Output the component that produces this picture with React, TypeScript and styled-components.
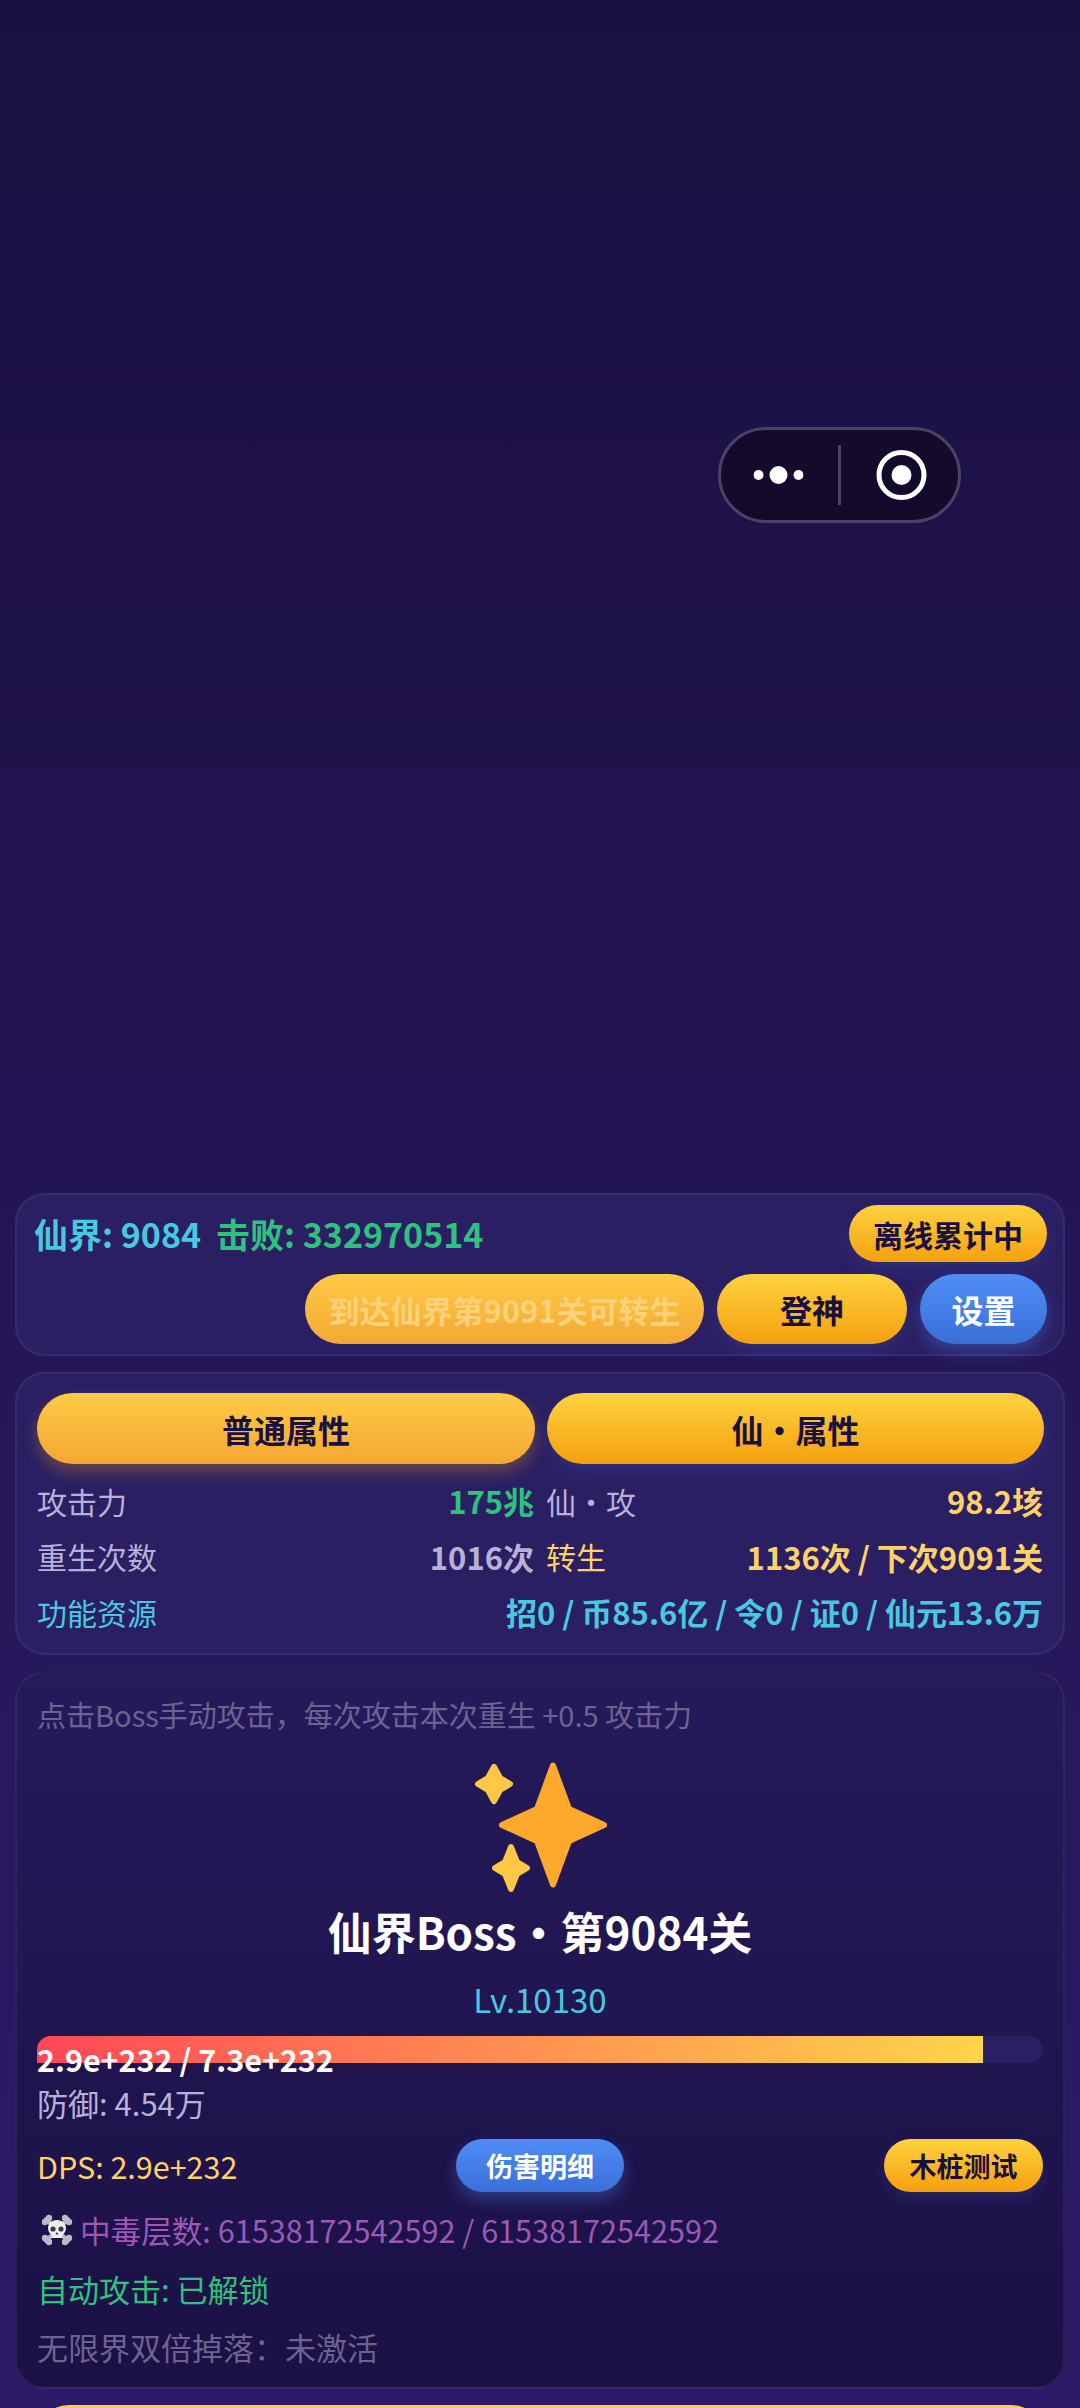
import styled, { createGlobalStyle } from "styled-components";

const Global = createGlobalStyle`
    html, body {
        margin: 0;
        padding: 0;
        background: #1a1040;
    }
    * {
        box-sizing: border-box;
    }
`;

const Page = styled.div`
    position: relative;
    width: 1080px;
    height: 2408px;
    overflow: hidden;
    padding: 1193px 15px 0;
    display: flex;
    flex-direction: column;
    gap: 16px;
    font-family: "Noto Sans CJK SC", "Noto Sans", sans-serif;
    background: linear-gradient(180deg, #1a1040 0%, #2d1b69 100%);
`;

const Capsule = styled.div`
    position: absolute;
    left: 718px;
    top: 427px;
    width: 243px;
    height: 96px;
    border-radius: 48px;
    background: #130a2c;
    border: 3px solid #4b4366;
    display: flex;
    align-items: center;
`;

const CapsuleSide = styled.div<{ $shift: number }>`
    flex: 1;
    display: flex;
    align-items: center;
    justify-content: center;
    transform: translateX(${(p) => p.$shift}px);
`;

const CapsuleDivider = styled.div`
    width: 3px;
    height: 60px;
    background: #4b4366;
`;

const Card = styled.div<{ $tall?: boolean }>`
    flex: none;
    border-radius: 30px;
    border: 2px solid rgba(255, 255, 255, 0.06);
    background: ${(p) =>
        p.$tall
            ? "linear-gradient(180deg, #251a5a 0%, #1b1145 100%)"
            : "#2a1f63"};
`;

const TopCard = styled(Card)`
    height: 163px;
    padding: 10px 16px 10px 17px;
    display: flex;
    flex-direction: column;
    gap: 12px;
`;

const TopRow = styled.div`
    display: flex;
    align-items: center;
    justify-content: space-between;
`;

const ActionRow = styled.div`
    display: flex;
    justify-content: flex-end;
    gap: 13px;
`;

const Progress = styled.div`
    display: flex;
    gap: 15px;
    font-size: 34px;
    font-weight: 700;
`;

const Colored = styled.span<{ $color: string }>`
    color: ${(p) => p.$color};
`;

const Pill = styled.button<{ $tone?: "gold" | "soft" | "blue"; $w: number; $h: number; $size?: number }>`
    width: ${(p) => p.$w}px;
    height: ${(p) => p.$h}px;
    flex: none;
    border: 0;
    padding: 0;
    border-radius: ${(p) => p.$h / 2}px;
    font-family: inherit;
    font-weight: 700;
    font-size: ${(p) => p.$size ?? 32}px;
    color: ${(p) => (p.$tone === "blue" ? "#ffffff" : "#1a1040")};
    background: ${(p) =>
        p.$tone === "blue"
            ? "linear-gradient(180deg, #4f8ef7 0%, #3a6fd8 100%)"
            : p.$tone === "soft"
              ? "linear-gradient(180deg, #ffcb45 0%, #f3a733 100%)"
              : "linear-gradient(180deg, #ffd23f 0%, #f5a00f 100%)"};
    box-shadow: 0 8px 16px
        ${(p) =>
            p.$tone === "blue"
                ? "rgba(79, 142, 247, 0.3)"
                : p.$tone === "soft"
                  ? "rgba(245, 160, 15, 0.3)"
                  : "rgba(79, 142, 247, 0.12)"};
`;

const LockedPill = styled(Pill)`
    box-shadow: none;
    color: #fdd27a;
`;

const CenteredPill = styled(Pill)`
    display: flex;
    align-items: center;
    justify-content: center;
`;

const StatsCard = styled(Card)`
    height: 283px;
    padding: 19px 20px 0;
`;

const TabRow = styled.div`
    display: grid;
    grid-template-columns: 1fr 1fr;
    gap: 12px;
    margin-bottom: 9px;
`;

const StatGrid = styled.div`
    display: grid;
    grid-template-columns: 1fr 1fr;
    column-gap: 12px;
`;

const Stat = styled.div<{ $wide?: boolean }>`
    grid-column: ${(p) => (p.$wide ? "1 / span 2" : "auto")};
    height: 55.5px;
    display: flex;
    align-items: center;
    justify-content: space-between;
    font-size: 30px;
`;

const StatValue = styled.span<{ $color: string }>`
    font-size: 31px;
    font-weight: 700;
    color: ${(p) => p.$color};
`;

const BossCard = styled(Card)`
    height: 718px;
    padding: 20px 20px 0;
    display: flex;
    flex-direction: column;
`;

const Hint = styled.div`
    height: 42px;
    line-height: 42px;
    font-size: 29px;
    color: #6d6391;
`;

const BossIcon = styled.svg`
    align-self: center;
    width: 200px;
    height: 160px;
    margin-top: 6px;
    flex: none;
`;

const BossName = styled.div`
    height: 60px;
    line-height: 60px;
    text-align: center;
    font-size: 44px;
    font-weight: 700;
    color: #ffffff;
`;

const Level = styled.div`
    margin-top: 16px;
    height: 44px;
    line-height: 44px;
    text-align: center;
    font-size: 33px;
    color: #48c9e0;
`;

const HpTrack = styled.div`
    position: relative;
    margin-top: 15px;
    height: 27px;
    border-radius: 14px;
    background: #2a1f63;
    flex: none;
`;

const HpFill = styled.div`
    height: 100%;
    border-radius: 14px 0 0 0;
    background: linear-gradient(90deg, #ff4757 0%, #ffd54a 100%);
`;

const HpText = styled.div`
    position: absolute;
    left: 0;
    top: 1px;
    line-height: 44px;
    font-size: 30.5px;
    font-weight: 700;
    color: #ffffff;
`;

const Line = styled.div<{ $color: string; $size?: number }>`
    display: flex;
    align-items: center;
    font-size: ${(p) => p.$size ?? 31}px;
    color: ${(p) => p.$color};
`;

const Defense = styled(Line)`
    margin-top: 19px;
    height: 40px;
`;

const DpsRow = styled.div`
    margin-top: 17px;
    height: 53px;
    display: grid;
    grid-template-columns: 1fr auto 1fr;
    align-items: center;
    font-size: 30.5px;
    color: #ffd166;
`;

const DpsEnd = styled.div`
    justify-self: end;
`;

const Status = styled(Line)`
    margin-top: 18px;
    height: 40px;
`;

const Skull = styled.svg`
    width: 32px;
    height: 32px;
    margin: 0 7px 0 4px;
    flex: none;
`;

const BottomBar = styled.div`
    flex: none;
    margin: 0 19px;
    height: 70px;
    border-radius: 35px;
    background: linear-gradient(180deg, #ffd23f 0%, #f5a00f 100%);
`;

const star = (cx: number, cy: number, w: number, h: number, waist: number) => {
    const x = w / 2;
    const y = h / 2;
    return `M${cx} ${cy - y}
        L${cx + waist} ${cy - waist}
        L${cx + x} ${cy}
        L${cx + waist} ${cy + waist}
        L${cx} ${cy + y}
        L${cx - waist} ${cy + waist}
        L${cx - x} ${cy}
        L${cx - waist} ${cy - waist}Z`;
};

export default function App() {
    return (
        <Page>
            <Global />
            <Capsule>
                <CapsuleSide $shift={-1.5}>
                    <svg width="50" height="22" viewBox="0 0 50 22">
                        <circle cx="5" cy="11" r="5" fill="#fff" />
                        <circle cx="25" cy="11" r="9" fill="#fff" />
                        <circle cx="45" cy="11" r="5" fill="#fff" />
                    </svg>
                </CapsuleSide>
                <CapsuleDivider />
                <CapsuleSide $shift={1.5}>
                    <svg width="52" height="52" viewBox="0 0 52 52">
                        <circle cx="26" cy="26" r="22.5" fill="none" stroke="#fff" strokeWidth="5" />
                        <circle cx="26" cy="26" r="10" fill="#fff" />
                    </svg>
                </CapsuleSide>
            </Capsule>

            <TopCard>
                <TopRow>
                    <Progress>
                        <Colored $color="#48c9e0">仙界: 9084</Colored>
                        <Colored $color="#2ec27e">击败: 332970514</Colored>
                    </Progress>
                    <Pill $w={198} $h={57} $size={30}>离线累计中</Pill>
                </TopRow>
                <ActionRow>
                    <LockedPill $w={399} $h={70} $tone="soft" $size={31}>到达仙界第9091关可转生</LockedPill>
                    <Pill $w={190} $h={70}>登神</Pill>
                    <Pill $w={127} $h={70} $tone="blue">设置</Pill>
                </ActionRow>
            </TopCard>

            <StatsCard>
                <TabRow>
                    <CenteredPill as="div" $w={498} $h={71} $tone="soft">普通属性</CenteredPill>
                    <CenteredPill as="div" $w={497} $h={71}>仙・属性</CenteredPill>
                </TabRow>
                <StatGrid>
                    <Stat>
                        <Colored $color="#b8b0d8">攻击力</Colored>
                        <StatValue $color="#2ec27e">175兆</StatValue>
                    </Stat>
                    <Stat>
                        <Colored $color="#b8b0d8">仙・攻</Colored>
                        <StatValue $color="#ffd166">98.2垓</StatValue>
                    </Stat>
                    <Stat>
                        <Colored $color="#b8b0d8">重生次数</Colored>
                        <StatValue $color="#b8b0d8">1016次</StatValue>
                    </Stat>
                    <Stat>
                        <Colored $color="#ffd166">转生</Colored>
                        <StatValue $color="#ffd166">1136次 / 下次9091关</StatValue>
                    </Stat>
                    <Stat $wide>
                        <Colored $color="#48c9e0">功能资源</Colored>
                        <StatValue $color="#48c9e0">招0 / 币85.6亿 / 令0 / 证0 / 仙元13.6万</StatValue>
                    </Stat>
                </StatGrid>
            </StatsCard>

            <BossCard $tall>
                <Hint>点击Boss手动攻击，每次攻击本次重生 +0.5 攻击力</Hint>
                <BossIcon viewBox="0 0 200 160">
                    <path d={star(113, 84, 102, 119, 16)} fill="#ffa92c" stroke="#ffa92c" strokeWidth="6" strokeLinejoin="round" />
                    <path d={star(54, 43, 32, 34, 6)} fill="#ffc844" stroke="#ffc844" strokeWidth="6" strokeLinejoin="round" />
                    <path d={star(71, 127, 32, 42, 6)} fill="#ffc844" stroke="#ffc844" strokeWidth="6" strokeLinejoin="round" />
                </BossIcon>
                <BossName>仙界Boss・第9084关</BossName>
                <Level>Lv.10130</Level>
                <HpTrack>
                    <HpFill style={{ width: `${(947 / 1007) * 100}%` }} />
                    <HpText>2.9e+232 / 7.3e+232</HpText>
                </HpTrack>
                <Defense $color="#b8b0d8">防御: 4.54万</Defense>
                <DpsRow>
                    <span>DPS: 2.9e+232</span>
                    <Pill $w={168} $h={53} $tone="blue" $size={27}>伤害明细</Pill>
                    <DpsEnd>
                        <Pill $w={159} $h={53} $size={27}>木桩测试</Pill>
                    </DpsEnd>
                </DpsRow>
                <Status $color="#9b59b6" $size={30.6}>
                    <Skull viewBox="0 0 32 32">
                        <g stroke="#b9bcc6" strokeWidth="4" strokeLinecap="round">
                            <path d="M5 5L27 27M27 5L5 27" />
                        </g>
                        <g fill="#b9bcc6">
                            <circle cx="4" cy="8" r="3.2" />
                            <circle cx="8" cy="4" r="3.2" />
                            <circle cx="28" cy="8" r="3.2" />
                            <circle cx="24" cy="4" r="3.2" />
                            <circle cx="4" cy="24" r="3.2" />
                            <circle cx="8" cy="28" r="3.2" />
                            <circle cx="28" cy="24" r="3.2" />
                            <circle cx="24" cy="28" r="3.2" />
                        </g>
                        <path d="M16 6c5.5 0 9 3.6 9 8.2 0 3-1.5 5.2-3.6 6.4V24H10.6v-3.4C8.5 19.4 7 17.2 7 14.2 7 9.6 10.5 6 16 6Z" fill="#eceded" />
                        <circle cx="12" cy="15" r="2.6" fill="#3a3a44" />
                        <circle cx="20" cy="15" r="2.6" fill="#3a3a44" />
                        <path d="M16 18l1.5 2.5h-3Z" fill="#3a3a44" />
                    </Skull>
                    中毒层数: 61538172542592 / 61538172542592
                </Status>
                <Status $color="#2ec27e">自动攻击: 已解锁</Status>
                <Status $color="#6d6391">无限界双倍掉落：未激活</Status>
            </BossCard>

            <BottomBar />
        </Page>
    );
}
